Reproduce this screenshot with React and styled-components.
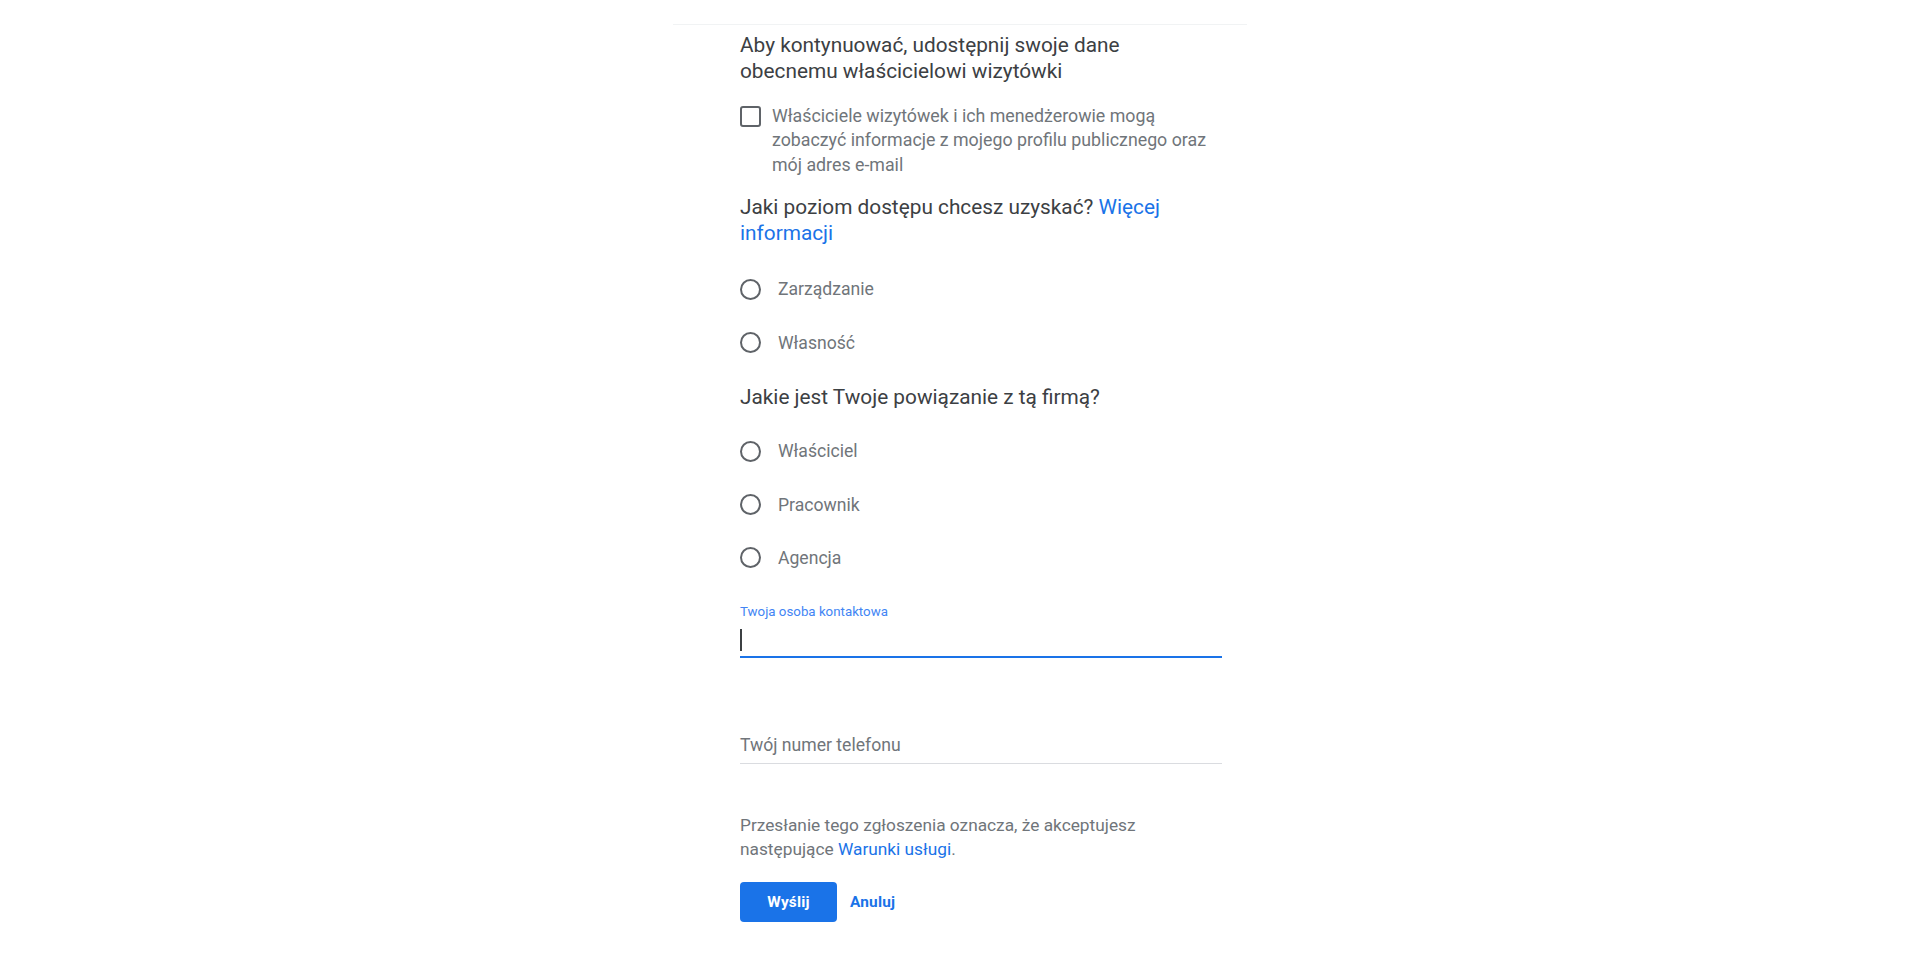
import React from 'react'
import styled, { createGlobalStyle } from 'styled-components'

const GlobalStyle = createGlobalStyle`
  html, body {
    margin: 0;
    padding: 0;
    background: #ffffff;
  }
  body {
    font-family: Roboto, 'Liberation Sans', Arial, sans-serif;
    -webkit-font-smoothing: antialiased;
  }
`

const Page = styled.div`
  display: flex;
  justify-content: center;
  padding-top: 24px;
  min-height: 960px;
  box-sizing: border-box;
`

const Card = styled.form`
  width: 574px;
  border-top: 1px solid #f1f3f4;
  padding: 7px 25px 0 67px;
  box-sizing: border-box;
`

const Heading = styled.h2`
  max-width: 460px;
  margin: ${(p) => p.$mt || 0}px 0 0;
  font-size: 20.8px;
  line-height: 26.3px;
  font-weight: 400;
  color: #3c4043;
`

const Link = styled.a`
  color: #1a73e8;
  text-decoration: none;
`

const NoWrap = styled.span`
  white-space: nowrap;
`

const CheckRow = styled.label`
  display: flex;
  align-items: flex-start;
  gap: 11px;
  margin-top: 19px;
`

const CheckBox = styled.span`
  flex: none;
  width: 21px;
  height: 21px;
  margin-top: 2px;
  border: 2px solid #5f6368;
  border-radius: 3px;
  box-sizing: border-box;
`

const MutedText = styled.p`
  margin: 0;
  font-size: 17.8px;
  line-height: 24.5px;
  color: #70757a;
`

const RadioGroup = styled.div`
  display: flex;
  flex-direction: column;
  margin-top: ${(p) => p.$mt || 0}px;
  margin-bottom: ${(p) => p.$mb || 0}px;
`

const RadioRow = styled.label`
  display: flex;
  align-items: center;
  gap: 17px;
  height: 53.3px;
  font-size: 17.6px;
  color: #70757a;
`

const RadioCircle = styled.span`
  flex: none;
  width: 21px;
  height: 21px;
  border: 2px solid #5f6368;
  border-radius: 50%;
  box-sizing: border-box;
`

const Field = styled.div`
  display: flex;
  flex-direction: column;
  margin-top: ${(p) => p.$mt || 0}px;
  border-bottom: ${(p) => (p.$focused ? '2px solid #1a73e8' : '1px solid #dadce0')};
`

const FieldLabel = styled.span`
  font-size: 13.3px;
  line-height: 16px;
  height: 16px;
  color: #4285f4;
`

const FieldInput = styled.div`
  display: flex;
  align-items: center;
  height: 36px;
  font-size: 17.6px;
  color: #70757a;
`

const Caret = styled.span`
  width: 2px;
  height: 22px;
  margin-top: 4px;
  background: #3c4043;
`

const Terms = styled(MutedText)`
  margin-top: 50px;
  font-size: 17.3px;
  line-height: 23.5px;
`

const Actions = styled.div`
  display: flex;
  align-items: center;
  gap: 13px;
  margin-top: 21px;
`

const Button = styled.button`
  height: 40px;
  padding: 0 ${(p) => (p.$primary ? 24 : 0)}px;
  min-width: ${(p) => (p.$primary ? 97 : 0)}px;
  border: none;
  border-radius: 4px;
  background: ${(p) => (p.$primary ? '#1a73e8' : 'transparent')};
  color: ${(p) => (p.$primary ? '#ffffff' : '#1a73e8')};
  font-family: Roboto, 'Liberation Sans', Arial, sans-serif;
  font-size: 15.4px;
  font-weight: 700;
  letter-spacing: 0.2px;
  cursor: pointer;
`

const accessLevels = ['Zarządzanie', 'Własność']
const relations = ['Właściciel', 'Pracownik', 'Agencja']

const App = () => (
  <>
    <GlobalStyle />
    <Page>
      <Card onSubmit={(e) => e.preventDefault()}>
        <Heading>Aby kontynuować, udostępnij swoje dane obecnemu właścicielowi wizytówki</Heading>
        <CheckRow>
          <CheckBox />
          <MutedText>
            Właściciele wizytówek i ich menedżerowie mogą zobaczyć informacje z mojego profilu publicznego
            oraz mój adres <NoWrap>e-mail</NoWrap>
          </MutedText>
        </CheckRow>

        <Heading $mt={17}>
          Jaki poziom dostępu chcesz uzyskać? <Link href="#">Więcej informacji</Link>
        </Heading>
        <RadioGroup $mt={16} $mb={15}>
          {accessLevels.map((item) => (
            <RadioRow key={item}>
              <RadioCircle />
              {item}
            </RadioRow>
          ))}
        </RadioGroup>

        <Heading>Jakie jest Twoje powiązanie z tą firmą?</Heading>
        <RadioGroup $mt={14}>
          {relations.map((item) => (
            <RadioRow key={item}>
              <RadioCircle />
              {item}
            </RadioRow>
          ))}
        </RadioGroup>

        <Field $mt={20} $focused>
          <FieldLabel>Twoja osoba kontaktowa</FieldLabel>
          <FieldInput>
            <Caret />
          </FieldInput>
        </Field>

        <Field $mt={53}>
          <FieldLabel />
          <FieldInput>Twój numer telefonu</FieldInput>
        </Field>

        <Terms>
          Przesłanie tego zgłoszenia oznacza, że akceptujesz następujące <Link href="#">Warunki usługi</Link>.
        </Terms>

        <Actions>
          <Button type="submit" $primary>
            Wyślij
          </Button>
          <Button type="button">Anuluj</Button>
        </Actions>
      </Card>
    </Page>
  </>
)

export default App
